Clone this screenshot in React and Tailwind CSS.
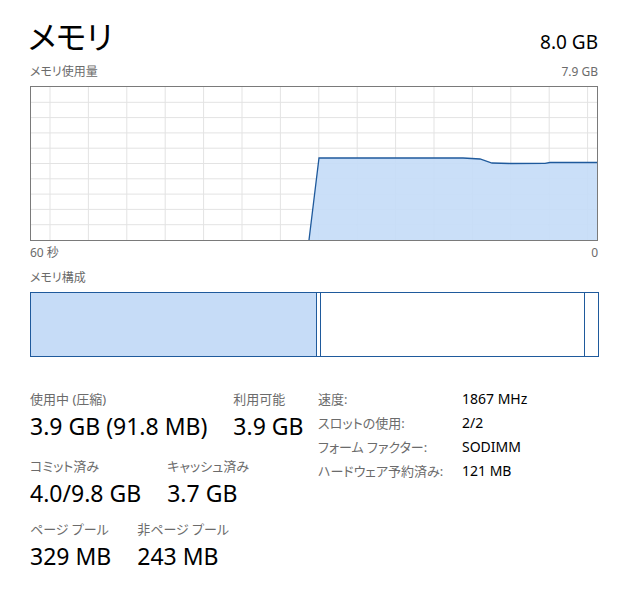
import React from 'react';

const jp = "font-['Segoe_UI','Noto_Sans','Noto_Sans_CJK_JP',sans-serif] [font-feature-settings:'palt']";

const vLines = Array.from({ length: 15 }, (_, k) => 19 + 38.4 * k);
const hLines = Array.from({ length: 9 }, (_, k) => 15.3 * (k + 1));

const usage = [
    [278, 153], [288, 71], [432, 71], [449, 72], [461, 76], [479, 76.5],
    [514, 76.3], [519, 75.5], [566, 75.5], [566, 153],
];

const Stat = ({ label, value }) => (
    <div className="flex flex-col">
        <span className="text-[13px] leading-[18px] text-[#6b6b6b]">{label}</span>
        <span className="mt-[3px] text-[23px] leading-[30px] text-black">{value}</span>
    </div>
);

const info = [
    ['速度:', '1867 MHz'],
    ['スロットの使用:', '2/2'],
    ['フォーム ファクター:', 'SODIMM'],
    ['ハードウェア予約済み:', '121 MB'],
];

const UsageChart = () => (
    <div className="w-[568px] h-[155px] border border-[#7a7a7a] bg-white">
        <svg width="566" height="153" className="block">
            {vLines.map((x) => (
                <line key={'v' + x} x1={x} y1="0" x2={x} y2="153" stroke="#e3e3e3" strokeWidth="1" />
            ))}
            {hLines.map((y) => (
                <line key={'h' + y} x1="0" y1={y} x2="566" y2={y} stroke="#e3e3e3" strokeWidth="1" />
            ))}
            <polygon
                points={usage.map((p) => p.join(',')).join(' ')}
                fill="#c6dcf7"
                fillOpacity="0.92"
            />
            <polyline
                points={usage.slice(0, -1).map((p) => p.join(',')).join(' ')}
                fill="none"
                stroke="#1f5a9c"
                strokeWidth="1.3"
            />
        </svg>
    </div>
);

export default function App() {
    return (
        <div className={`w-[627px] h-[595px] bg-white pl-[30px] pr-[29px] pt-[16px] ${jp}`}>
            <div className="flex justify-between items-baseline">
                <span className="text-[32px] leading-[42px] text-black -ml-[2px]">メモリ</span>
                <span className="text-[19px] leading-[26px] text-black">8.0 GB</span>
            </div>

            <div className="mt-[6px] flex justify-between text-[12px] leading-[16px] text-[#6b6b6b]">
                <span>メモリ使用量</span>
                <span>7.9 GB</span>
            </div>
            <div className="mt-[6px]">
                <UsageChart />
            </div>
            <div className="mt-[4px] w-[568px] flex justify-between text-[12px] leading-[16px] text-[#6b6b6b]">
                <span>60 秒</span>
                <span>0</span>
            </div>

            <div className="mt-[9px] text-[12px] leading-[16px] text-[#6b6b6b]">メモリ構成</div>
            <div className="mt-[6px] flex h-[65px] w-[569px]">
                <div className="w-[287px] border border-[#1f5a9c] bg-[#c6dcf7]" />
                <div className="w-[4px] border-y border-r border-[#1f5a9c]" />
                <div className="w-[264px] border-y border-r border-[#1f5a9c]" />
                <div className="w-[14px] border-y border-r border-[#1f5a9c]" />
            </div>

            <div className="mt-[33px] flex items-start">
                <div className="w-[288px] flex flex-col">
                    <div className="flex gap-[26px]">
                        <Stat label="使用中 (圧縮)" value="3.9 GB (91.8 MB)" />
                        <Stat label="利用可能" value="3.9 GB" />
                    </div>
                    <div className="mt-[16px] flex gap-[26px]">
                        <Stat label="コミット済み" value="4.0/9.8 GB" />
                        <Stat label="キャッシュ済み" value="3.7 GB" />
                    </div>
                    <div className="mt-[12px] flex gap-[26px]">
                        <Stat label="ページ プール" value="329 MB" />
                        <Stat label="非ページ プール" value="243 MB" />
                    </div>
                </div>
                <div className="grid grid-cols-[144px_auto] -mt-[3px] leading-[24px]">
                    {info.map(([k, v]) => (
                        <React.Fragment key={k}>
                            <span className="text-[13px] text-[#6b6b6b]">{k}</span>
                            <span className="text-[14px] text-black">{v}</span>
                        </React.Fragment>
                    ))}
                </div>
            </div>
        </div>
    );
}
